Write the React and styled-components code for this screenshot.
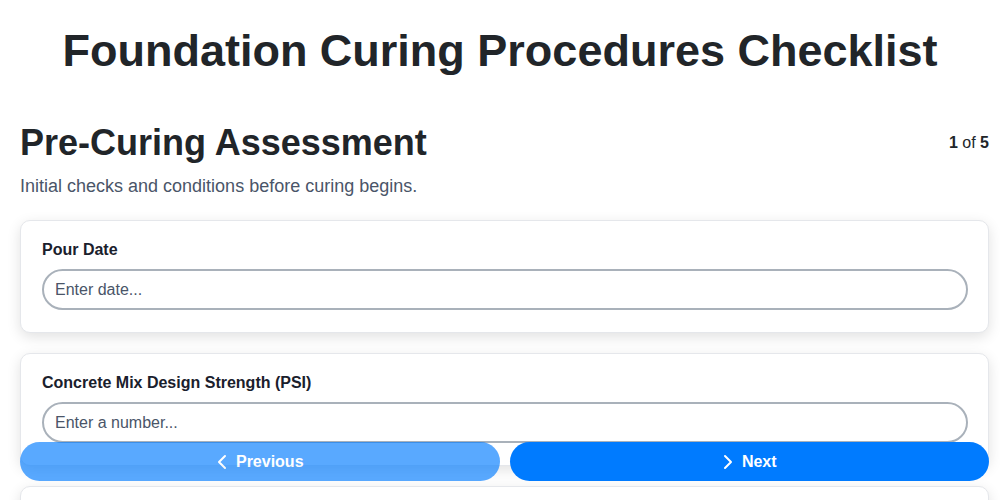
import React, { useState } from 'react';
import styled, { createGlobalStyle } from 'styled-components';
import { ChevronLeft, ChevronRight } from 'lucide-react';

const GlobalStyle = createGlobalStyle`
    body {
        margin: 0;
        background: #ffffff;
        font-family: "Liberation Sans", Arial, sans-serif;
        color: #212529;
    }
`

const Page = styled.div`
    padding: 0 11px 120px 20px;
`
const Title = styled.h1`
    text-align: center;
    font-size: 45px;
    line-height: 52px;
    margin: 25px 0 0 -9px;
    color: #212529;
`
const StepHeader = styled.div`
    display: flex;
    justify-content: space-between;
    align-items: center;
    margin-top: 46px;
`
const StepTitle = styled.h2`
    font-size: 36px;
    line-height: 40px;
    margin: 0;
    color: #212529;
`
const StepCount = styled.div`
    font-size: 16px;
    color: #212529;
    b {
        font-weight: 700;
    }
`
const StepDescription = styled.p`
    font-size: 18px;
    line-height: 21px;
    color: #4a5568;
    margin: 13px 0 23px;
`
const Card = styled.div`
    background: #ffffff;
    border: 1px solid #e5e7eb;
    border-radius: 10px;
    box-shadow: 0 4px 14px rgba(0, 0, 0, 0.12);
    padding: 20px 20px 22px 21px;
    margin-bottom: 20px;
`
const Label = styled.label`
    display: block;
    font-size: 16px;
    line-height: 18px;
    font-weight: 700;
    margin: 0 0 10px;
    color: #1a202c;
`
const Input = styled.input`
    display: block;
    box-sizing: border-box;
    width: 100%;
    height: 41px;
    border: 2px solid #a9b1ba;
    border-radius: 21px;
    padding: 0 11px;
    font-family: inherit;
    font-size: 16px;
    color: #212529;
    outline: none;
    &::placeholder {
        color: #4a5568;
    }
`
const Footer = styled.div`
    position: fixed;
    left: 20px;
    right: 11px;
    bottom: 19px;
    display: grid;
    grid-template-columns: 1fr 1fr;
    gap: 10px;
`
const NavButton = styled.button`
    display: flex;
    align-items: center;
    justify-content: center;
    gap: 2px;
    height: 39px;
    padding: 0 6px 0 0;
    border: none;
    border-radius: 20px;
    background: #007bff;
    color: #ffffff;
    font-family: inherit;
    font-size: 16px;
    font-weight: 700;
    cursor: pointer;
    &:disabled {
        opacity: 0.65;
        cursor: default;
    }
`

const steps = [
    {
        title: 'Pre-Curing Assessment',
        description: 'Initial checks and conditions before curing begins.',
        fields: [
            { label: 'Pour Date', type: 'text', placeholder: 'Enter date...' },
            { label: 'Concrete Mix Design Strength (PSI)', type: 'number', placeholder: 'Enter a number...' },
            { label: 'Ambient Temperature (°F)', type: 'number', placeholder: 'Enter a number...' },
        ],
    },
    { title: 'Curing Method', description: 'Select and apply the curing method.', fields: [] },
    { title: 'Moisture Monitoring', description: 'Daily moisture checks.', fields: [] },
    { title: 'Temperature Monitoring', description: 'Daily temperature checks.', fields: [] },
    { title: 'Final Inspection', description: 'Sign-off after curing is complete.', fields: [] },
]

const App = () => {
    const [step, setStep] = useState(0)
    const current = steps[step]

    return(
        <Page>
            <GlobalStyle />
            <Title>Foundation Curing Procedures Checklist</Title>

            <StepHeader>
                <StepTitle>{current.title}</StepTitle>
                <StepCount><b>{step + 1}</b> of <b>{steps.length}</b></StepCount>
            </StepHeader>
            <StepDescription>{current.description}</StepDescription>

            {current.fields.map((field) => (
                <Card key={field.label}>
                    <Label>{field.label}</Label>
                    <Input type={field.type} placeholder={field.placeholder} />
                </Card>
            ))}

            <Footer>
                <NavButton disabled={step === 0} onClick={() => setStep(step - 1)}>
                    <ChevronLeft size={24} /> Previous
                </NavButton>
                <NavButton disabled={step === steps.length - 1} onClick={() => setStep(step + 1)}>
                    <ChevronRight size={24} /> Next
                </NavButton>
            </Footer>
        </Page>
    );
};

export default App
